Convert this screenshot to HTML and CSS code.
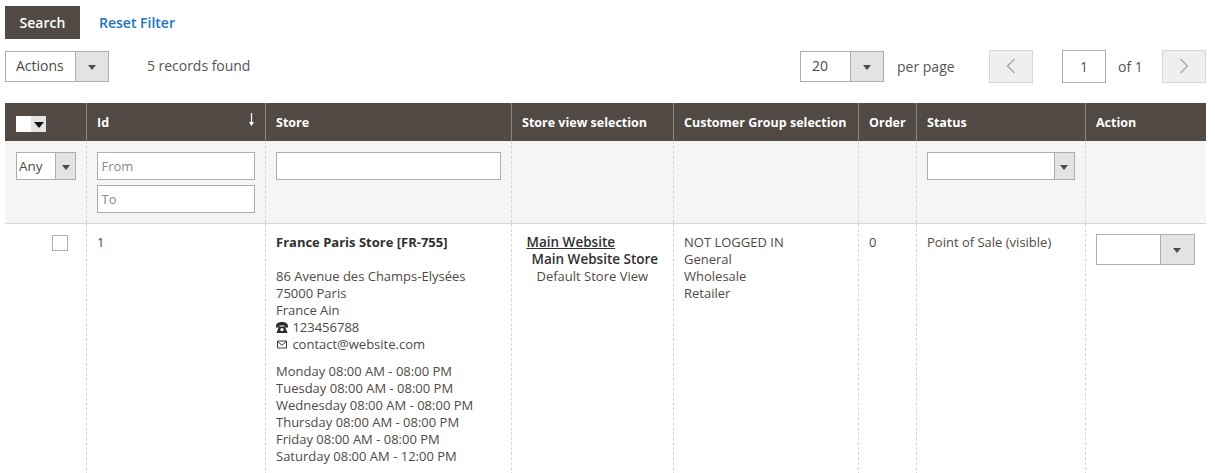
FILE: index.html
```html
<!DOCTYPE html>
<html lang="en">

<head>
    <meta charset="UTF-8">
    <title>Stores</title>
    <link rel="stylesheet" href="styles.css">
</head>

<body>
    <div class="filter_actions">
        <button class="search_btn">Search</button>
        <a class="reset_link">Reset Filter</a>
    </div>
    <div class="toolbar">
        <div class="drop actions_drop">
            <span class="drop_value">Actions</span>
            <span class="drop_arrow"><i class="caret"></i></span>
        </div>
        <span class="records">5 records found</span>
        <div class="pager">
            <div class="drop perpage_drop">
                <span class="drop_value">20</span>
                <span class="drop_arrow"><i class="caret"></i></span>
            </div>
            <span class="perpage_label">per page</span>
            <button class="page_btn prev_btn">
                <svg width="10" height="16" viewBox="0 0 10 16"><path d="M8.5 1 L1.5 8 L8.5 15" fill="none" stroke="#a9a9a9" stroke-width="1.4"/></svg>
            </button>
            <div class="page_input">1</div>
            <span class="page_total">of 1</span>
            <button class="page_btn next_btn">
                <svg width="10" height="16" viewBox="0 0 10 16"><path d="M1.5 1 L8.5 8 L1.5 15" fill="none" stroke="#a9a9a9" stroke-width="1.4"/></svg>
            </button>
        </div>
    </div>
    <table class="grid">
        <colgroup>
            <col class="c_check">
            <col class="c_id">
            <col class="c_store">
            <col class="c_view">
            <col class="c_group">
            <col class="c_order">
            <col class="c_status">
            <col class="c_action">
        </colgroup>
        <thead>
            <tr class="head_row">
                <th>
                    <div class="mass_select"><span class="mass_box"></span><span class="mass_arrow"><i class="caret caret_dark"></i></span></div>
                </th>
                <th class="sorted">Id
                    <svg class="sort_arrow" width="7" height="13" viewBox="0 0 7 13"><path d="M3.5 0 V11" stroke="#ffffff" stroke-width="1.2"/><path d="M1 9 L3.5 13 L6 9 Z" fill="#ffffff"/></svg>
                </th>
                <th>Store</th>
                <th>Store view selection</th>
                <th>Customer Group selection</th>
                <th>Order</th>
                <th>Status</th>
                <th>Action</th>
            </tr>
            <tr class="filter_row">
                <td>
                    <div class="drop any_drop">
                        <span class="drop_value">Any</span>
                        <span class="drop_arrow"><i class="caret"></i></span>
                    </div>
                </td>
                <td>
                    <div class="text_input placeholder">From</div>
                    <div class="text_input placeholder">To</div>
                </td>
                <td><div class="text_input"></div></td>
                <td></td>
                <td></td>
                <td></td>
                <td>
                    <div class="drop status_drop">
                        <span class="drop_value"></span>
                        <span class="drop_arrow"><i class="caret"></i></span>
                    </div>
                </td>
                <td></td>
            </tr>
        </thead>
        <tbody>
            <tr class="data_row">
                <td class="check_cell"><span class="checkbox"></span></td>
                <td>1</td>
                <td>
                    <div class="store_name">France Paris Store [FR-755]</div>
                    <div class="store_address">
                        86 Avenue des Champs-Elysées<br>
                        75000 Paris<br>
                        France Ain<br>
                        <span class="contact">
                            <svg width="12" height="11" viewBox="0 0 12 11"><path d="M0 4.6 C0 1 3 0 6 0 C9 0 12 1 12 4.6 L12 5.6 L8.6 5.6 L8.6 3.6 L3.4 3.6 L3.4 5.6 L0 5.6 Z M3 4.6 L9 4.6 L11.5 11 L0.5 11 Z" fill="#2b2b2b"/><circle cx="6" cy="7.6" r="1.7" fill="#fff"/></svg>
                            123456788
                        </span><br>
                        <span class="contact">
                            <svg width="12" height="11" viewBox="0 0 12 11"><path d="M1.5 2 H10.5 V9 H1.5 Z M1.5 2.5 L6 6.2 L10.5 2.5" fill="none" stroke="#3a3a3a" stroke-width="1"/></svg>
                            contact@website.com
                        </span>
                    </div>
                    <div class="store_hours">
                        Monday 08:00 AM - 08:00 PM<br>
                        Tuesday 08:00 AM - 08:00 PM<br>
                        Wednesday 08:00 AM - 08:00 PM<br>
                        Thursday 08:00 AM - 08:00 PM<br>
                        Friday 08:00 AM - 08:00 PM<br>
                        Saturday 08:00 AM - 12:00 PM
                    </div>
                </td>
                <td class="view_cell">
                    <div class="view_site">Main Website</div>
                    <div class="view_store">Main Website Store</div>
                    <div class="view_name">Default Store View</div>
                </td>
                <td>NOT LOGGED IN<br>General<br>Wholesale<br>Retailer</td>
                <td>0</td>
                <td>Point of Sale (visible)</td>
                <td class="action_cell">
                    <div class="drop action_drop">
                        <span class="drop_value"></span>
                        <span class="drop_arrow"><i class="caret"></i></span>
                    </div>
                </td>
            </tr>
        </tbody>
    </table>
</body>

</html>
```

FILE: styles.css
```css
body,
html {
    margin: 0;
    background-color: white;
}

html {
    height: 473px;
    overflow: hidden;
}

body {
    padding: 6px 9px 0 5px;
    font-family: "Open Sans", sans-serif;
    font-size: 13px;
    line-height: 17px;
    color: #514943;
}

.filter_actions {
    display: flex;
    align-items: center;
    gap: 19px;
}

.search_btn {
    width: 75px;
    height: 33px;
    border: none;
    background-color: #514943;
    color: white;
    font-family: inherit;
    font-size: 14px;
    font-weight: 600;
    padding: 0;
}

.reset_link {
    color: #1a75bb;
    font-size: 14px;
    font-weight: 600;
}

.toolbar {
    display: flex;
    align-items: center;
    margin-top: 11px;
    height: 32px;
}

.records {
    margin-left: 38px;
    margin-bottom: 2px;
    font-size: 14px;
    letter-spacing: -0.03px;
    color: #555555;
}

.pager {
    display: flex;
    align-items: center;
    margin-left: auto;
    font-size: 14px;
    color: #555555;
}

.drop {
    display: flex;
    box-sizing: border-box;
    border: 1px solid #adadad;
    background-color: white;
    font-size: 14px;
    color: #514943;
}

.drop_value {
    flex: 1;
    padding-left: 10px;
    line-height: 28px;
}

.drop_arrow {
    display: flex;
    align-items: center;
    justify-content: center;
    background-color: #e3e3e3;
    border-left: 1px solid #adadad;
}

.caret {
    width: 0;
    height: 0;
    border-top: 5px solid #514943;
    border-left: 4px solid transparent;
    border-right: 4px solid transparent;
    margin-top: 2px;
}

.caret_dark {
    border-top-color: #111111;
    border-left-width: 5px;
    border-right-width: 5px;
    border-top-width: 6px;
}

.actions_drop {
    width: 104px;
    height: 31px;
}

.actions_drop .drop_arrow {
    width: 32px;
}

.perpage_drop {
    width: 84px;
    height: 31px;
}

.perpage_drop .drop_value {
    padding-left: 11px;
}

.perpage_drop .drop_arrow {
    width: 32px;
}

.perpage_label {
    margin-left: 13px;
    width: 92px;
}

.page_btn {
    display: flex;
    align-items: center;
    justify-content: center;
    box-sizing: border-box;
    width: 44px;
    height: 33px;
    padding: 0;
    border: 1px solid #d6d6d6;
    background-color: #efefef;
}

.page_input {
    box-sizing: border-box;
    width: 44px;
    height: 33px;
    margin-left: 29px;
    border: 1px solid #adadad;
    text-align: center;
    line-height: 31px;
}

.page_total {
    width: 56px;
    padding-left: 12px;
    box-sizing: border-box;
}

.grid {
    table-layout: fixed;
    border-collapse: collapse;
    width: 1201px;
    margin-top: 21px;
}

.c_check { width: 81px; }
.c_id { width: 179px; }
.c_store { width: 246px; }
.c_view { width: 162px; }
.c_group { width: 185px; }
.c_order { width: 58px; }
.c_status { width: 169px; }
.c_action { width: 121px; }

.head_row th {
    height: 38px;
    padding: 0 0 0 10.5px;
    box-sizing: border-box;
    background-color: #514943;
    border-left: 1px solid #8a837e;
    color: white;
    font-size: 12.5px;
    font-weight: 700;
    text-align: left;
    white-space: nowrap;
}

.head_row th:first-child {
    border-left: none;
    padding-left: 11px;
}

.sorted {
    position: relative;
}

.sort_arrow {
    position: absolute;
    right: 10px;
    top: 10px;
}

.mass_select {
    display: flex;
    width: 30px;
    height: 16px;
    margin-top: 3px;
}

.mass_box {
    width: 15px;
    background-color: white;
}

.mass_arrow {
    display: flex;
    align-items: center;
    justify-content: center;
    width: 15px;
    background-color: #e3e3e3;
}

.filter_row td {
    height: 82px;
    padding: 11px 10px 0 10px;
    box-sizing: border-box;
    background-color: #f5f5f5;
    border-left: 1px dashed #d6d6d6;
    border-bottom: 1px solid #d6d6d6;
    vertical-align: top;
}

.filter_row td:first-child {
    border-left: none;
    padding-left: 11px;
}

.text_input {
    box-sizing: border-box;
    height: 28px;
    border: 1px solid #adadad;
    background-color: white;
    padding-left: 4px;
    font-size: 13px;
    line-height: 26px;
}

.text_input + .text_input {
    margin-top: 5px;
}

.placeholder {
    color: #8a8a8a;
}

.any_drop {
    width: 60px;
    height: 28px;
    font-size: 13.5px;
}

.any_drop .drop_value {
    padding-left: 2px;
    line-height: 27px;
}

.any_drop .drop_arrow {
    width: 19px;
}

.status_drop {
    width: 148px;
    height: 28px;
}

.status_drop .drop_arrow {
    width: 19px;
}

.data_row td {
    padding: 10px 10px 10px 10.5px;
    border-left: 1px dashed #d6d6d6;
    vertical-align: top;
}

.data_row td:first-child {
    border-left: none;
}

.check_cell {
    text-align: center;
}

.checkbox {
    display: inline-block;
    box-sizing: border-box;
    width: 16px;
    height: 16px;
    margin: 1px 0 0 28px;
    border: 1px solid #adadad;
    background-color: white;
}

.store_name {
    font-weight: 700;
    color: #303030;
    margin-bottom: 17px;
}

.store_hours {
    margin-top: 10px;
}

.contact svg {
    vertical-align: -1px;
    margin-right: 1px;
}

.view_site {
    padding-left: 4.5px;
    font-size: 13.5px;
    font-weight: 600;
    color: #303030;
    text-decoration: underline;
}

.view_store {
    padding-left: 9.5px;
    font-size: 13.5px;
    font-weight: 600;
    color: #303030;
    white-space: nowrap;
}

.view_name {
    padding-left: 14.5px;
}

.action_drop {
    width: 99px;
    height: 31px;
    margin-left: -0.5px;
}

.action_drop .drop_arrow {
    width: 33px;
}
```
